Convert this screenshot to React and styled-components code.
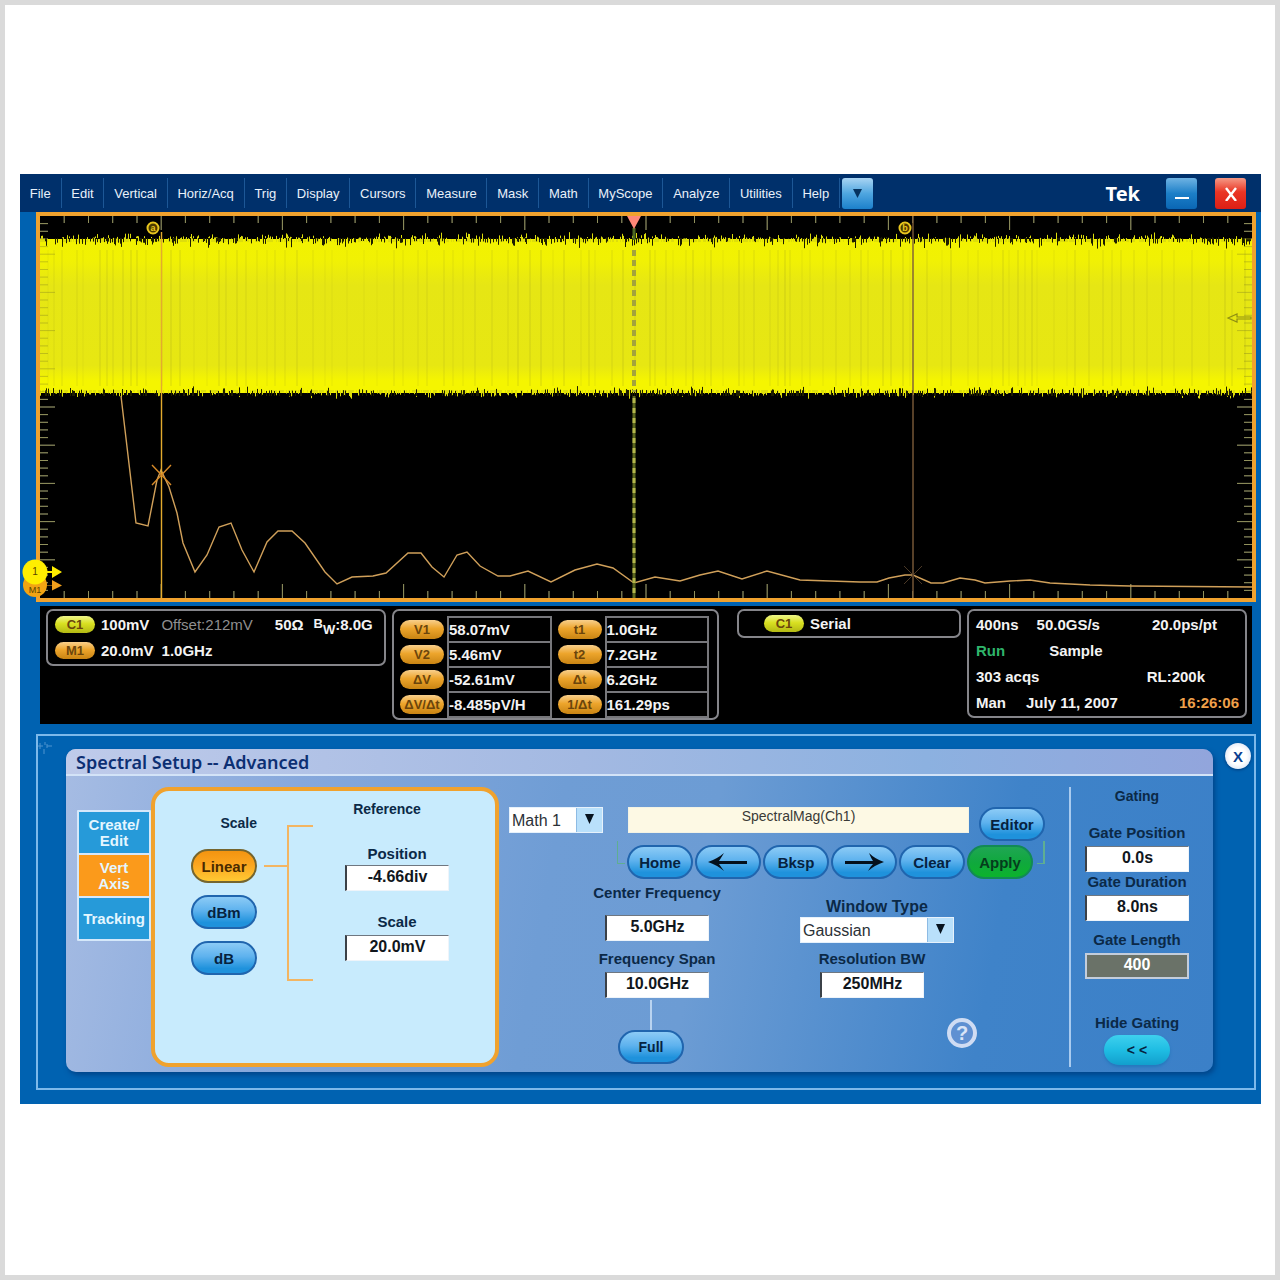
import React from "react";
import styled, { createGlobalStyle, css } from "styled-components";

const menuItems = [
  "File", "Edit", "Vertical", "Horiz/Acq", "Trig", "Display", "Cursors",
  "Measure", "Mask", "Math", "MyScope", "Analyze", "Utilities", "Help",
];

const voltCursors = [
  ["V1", "58.07mV"],
  ["V2", "5.46mV"],
  ["ΔV", "-52.61mV"],
  ["ΔV/Δt", "-8.485pV/H"],
];

const timeCursors = [
  ["t1", "1.0GHz"],
  ["t2", "7.2GHz"],
  ["Δt", "6.2GHz"],
  ["1/Δt", "161.29ps"],
];

// plot area is 1212 x 382, ten divisions each way
const PLOT_W = 1212;
const PLOT_H = 382;

const spectrum = [
  [81, 180], [96, 307], [108, 310], [117, 264], [121, 254], [129, 271],
  [137, 297], [143, 327], [155, 356], [167, 339], [179, 311], [191, 307],
  [202, 334], [214, 356], [227, 326], [238, 315], [252, 315], [265, 327],
  [285, 356], [297, 368], [312, 361], [333, 360], [346, 357], [368, 337],
  [381, 337], [392, 351], [404, 361], [417, 339], [427, 336], [440, 350],
  [458, 360], [470, 360], [488, 355], [511, 366], [535, 354], [557, 348],
  [573, 352], [594, 367], [615, 361], [640, 365], [660, 359], [678, 355],
  [702, 363], [727, 355], [760, 364], [820, 366], [837, 366], [849, 362],
  [865, 359], [873, 359], [891, 367], [903, 367], [920, 362], [935, 364],
  [945, 367], [970, 365], [990, 364], [1010, 367], [1050, 369], [1090, 370],
  [1212, 371],
];

function makeRandom(seed) {
  let s = seed;
  return () => {
    s = (s * 16807) % 2147483647;
    return s / 2147483647;
  };
}

// one column per pixel, with thin spikes out of the band and gaps into it
function noiseBand() {
  const rnd = makeRandom(77);
  let spikes = "";
  let gaps = "";
  for (let x = 0; x < PLOT_W; x++) {
    if (rnd() < 0.62) spikes += `M${x}.5 26V${(24 - rnd() * rnd() * 8).toFixed(1)}`;
    if (rnd() < 0.3) gaps += `M${x}.5 22V${(25 + rnd() * rnd() * 8).toFixed(1)}`;
    if (rnd() < 0.6) spikes += `M${x}.5 174V${(176 + rnd() * rnd() * 7).toFixed(1)}`;
    if (rnd() < 0.22) gaps += `M${x}.5 180V${(175 - rnd() * rnd() * 5).toFixed(1)}`;
  }
  return { spikes, gaps };
}

function streaks() {
  const rnd = makeRandom(31);
  const lines = [];
  let x = 8;
  while (x < PLOT_W) {
    lines.push({ x: Math.round(x), o: 0.12 + rnd() * 0.3 });
    x += 5 + rnd() * 13;
  }
  return lines;
}

function ticks() {
  let d = "";
  for (let i = 1; i < 50; i++) {
    const x = ((PLOT_W / 50) * i).toFixed(1);
    const y = ((PLOT_H / 50) * i).toFixed(1);
    const lx = i % 5 === 0 ? 14 : 7;
    const ly = i % 5 === 0 ? 15 : 8;
    d += `M${x} 0v${lx}M${x} ${PLOT_H}v-${lx}`;
    d += `M0 ${y}h${ly}M${PLOT_W} ${y}h-${ly}`;
  }
  return d;
}

const noise = noiseBand();
const bandStreaks = streaks();
const tickPath = ticks();

function Plot() {
  return (
    <PlotSvg viewBox="0 0 1212 382" preserveAspectRatio="none">
      <defs>
        <linearGradient id="band" x1="0" y1="0" x2="0" y2="1">
          <stop offset="0" stopColor="#f2f200" />
          <stop offset="0.14" stopColor="#f1f104" />
          <stop offset="0.3" stopColor="#e6e614" />
          <stop offset="0.82" stopColor="#e7e712" />
          <stop offset="0.92" stopColor="#f5f500" />
          <stop offset="1" stopColor="#f5f500" />
        </linearGradient>
      </defs>
      <path d={tickPath} stroke="#96968e" strokeWidth="1" fill="none" />
      <rect y="23" width="1212" height="154" fill="url(#band)" />
      <path d={noise.spikes} stroke="#dede0c" fill="none" />
      <path d={noise.gaps} stroke="#1d1d00" fill="none" />
      {bandStreaks.map((s) => (
        <line key={s.x} x1={s.x} x2={s.x} y1="34" y2="170" stroke="#a9a91c" strokeOpacity={s.o} />
      ))}
      <path d={tickPath} stroke="#8c8c20" strokeOpacity="0.45" fill="none" />
      <polyline
        points={spectrum.map((p) => p.join(",")).join(" ")}
        fill="none"
        stroke="#d0a05a"
        strokeWidth="1.4"
      />
      <line x1="121.5" x2="121.5" y1="16" y2="382" stroke="#e3ab2e" strokeWidth="1.4" />
      <path d="M112 249l19 20M131 249l-19 20" stroke="#d78a28" strokeWidth="1.4" />
      <line x1="873" x2="873" y1="0" y2="382" stroke="#7d5c3a" strokeWidth="1.4" />
      <path d="M864 350l18 18M882 350l-18 18" stroke="#5d4630" strokeWidth="0.8" />
      <line x1="594" x2="594" y1="12" y2="24" stroke="#4d6a22" strokeWidth="3" />
      <line x1="594" x2="594" y1="34" y2="176" stroke="#a3a33c" strokeWidth="4" strokeDasharray="6 4" />
      <line x1="594" x2="594" y1="180" y2="382" stroke="#5b661e" strokeWidth="3" />
      <line x1="594" x2="594" y1="182" y2="382" stroke="#b3b54c" strokeWidth="3" strokeDasharray="5 5" />
      <path d="M587 0h14l-7 13z" fill="#ff8878" />
      <path d="M1188 102l9-4v3h14v2h-14v3z" fill="none" stroke="#8f8f12" strokeWidth="1.2" />
      <CursorFlag x={113} label="a" />
      <CursorFlag x={865} label="b" />
    </PlotSvg>
  );
}

function CursorFlag({ x, label }) {
  return (
    <g>
      <circle cx={x} cy="12" r="5.5" fill="#4d3a00" stroke="#e8c61e" strokeWidth="2" />
      <FlagText x={x} y="15" textAnchor="middle">{label}</FlagText>
    </g>
  );
}

function ChannelMarks() {
  return (
    <MarksSvg viewBox="0 0 44 40">
      <circle cx="14" cy="27" r="12" fill="#f2a413" />
      <path d="M25 27h6v-5l10 5.500l-10 5v-5h-6z" fill="#f2a01c" />
      <MarkText x="14" y="35" textAnchor="middle" $small>M1</MarkText>
      <circle cx="14" cy="14" r="12.500" fill="#ffee00" />
      <path d="M26 13h5v-5l10 6l-10 6v-5h-5z" fill="#ffee00" />
      <MarkText x="14" y="17" textAnchor="middle">1</MarkText>
    </MarksSvg>
  );
}

function CursorTable({ rows }) {
  return (
    <Readings>
      <tbody>
        {rows.map(([name, value]) => (
          <tr key={name}>
            <ReadingName scope="row"><Pill $wide>{name}</Pill></ReadingName>
            <ReadingValue>{value}</ReadingValue>
          </tr>
        ))}
      </tbody>
    </Readings>
  );
}

function Field({ id, label, value, gap, before }) {
  return (
    <FieldBox $gap={gap} $before={before}>
      <Label htmlFor={id}>{label}</Label>
      <ValueInput id={id} defaultValue={value} />
    </FieldBox>
  );
}

function DropDown({ id, label, options, width }) {
  return (
    <SelectBox $width={width}>
      <Select id={id} aria-label={label}>
        {options.map((o) => <option key={o}>{o}</option>)}
      </Select>
      <SelectArrow>
        <svg width="9" height="11" viewBox="0 0 9 11"><path d="M0 1h9l-4.500 10z" fill="#07131f" /></svg>
      </SelectArrow>
    </SelectBox>
  );
}

function ArrowIcon({ flip }) {
  return (
    <svg width="40" height="18" viewBox="0 0 40 18">
      <path
        d={flip
          ? "M40 9q-9-3-15-9q2 5 4 8h-28v3h28q-3 3-5 7q7-6 16-9z"
          : "M0 9q9-3 16-9q-3 5-5 8h28v3h-28q2 3 5 7q-7-6-16-9z"}
        fill="#04101c"
      />
    </svg>
  );
}

export default function App() {
  return (
    <Page>
      <GlobalStyle />
      <Window>
        <MenuBar>
          <Menus>
            {menuItems.map((m) => <MenuButton key={m}>{m}</MenuButton>)}
          </Menus>
          <BarButton aria-label="More menus" $first>
            <svg width="9" height="9" viewBox="0 0 9 9"><path d="M0 0h9l-4.500 9z" fill="#06335f" /></svg>
          </BarButton>
          <Brand>Tek</Brand>
          <BarButton aria-label="Minimize" $deep>
            <svg width="16" height="16" viewBox="0 0 16 16"><path d="M1 12h14v2h-14z" fill="#fff" /></svg>
          </BarButton>
          <BarButton aria-label="Close" $red>
            <svg width="14" height="16" viewBox="0 0 14 16"><path d="M2 3l10 13M12 3l-10 13" stroke="#fff" strokeWidth="2.400" /></svg>
          </BarButton>
        </MenuBar>

        <Body>
          <Scope>
            <Plot />
            <ChannelMarks />
          </Scope>

          <Readout>
            <ReadoutBox>
              <Line>
                <Pill $lime>C1</Pill>
                <Value $before={6}>100mV</Value>
                <Value $before={12} $dim>Offset:212mV</Value>
                <Value $before={22}>50Ω</Value>
                <Value $before={10}><Sup>B</Sup><Sub>W</Sub>:8.0G</Value>
              </Line>
              <Line>
                <Pill>M1</Pill>
                <Value $before={6}>20.0mV</Value>
                <Value $before={8}>1.0GHz</Value>
              </Line>
            </ReadoutBox>
            <ReadoutBox $tables>
              <CursorTable rows={voltCursors} />
              <CursorTable rows={timeCursors} />
            </ReadoutBox>
            <ReadoutBox $apart>
              <Line>
                <Pill $lime>C1</Pill>
                <Value $before={6}>Serial</Value>
              </Line>
            </ReadoutBox>
            <ReadoutBox>
              <Line>
                <Value>400ns</Value>
                <Value $before={18}>50.0GS/s</Value>
                <Value $push $after={22}>20.0ps/pt</Value>
              </Line>
              <Line>
                <Value $green>Run</Value>
                <Value $before={44}>Sample</Value>
              </Line>
              <Line>
                <Value>303 acqs</Value>
                <Value $push $after={34}>RL:200k</Value>
              </Line>
              <Line>
                <Value>Man</Value>
                <Value $before={20}>July 11, 2007</Value>
                <Value $push $amber>16:26:06</Value>
              </Line>
            </ReadoutBox>
          </Readout>

          <Dock>
            <svg width="14" height="12" viewBox="0 0 14 12">
              <path d="M0 4h5M9 4h5M7 0v3M2 1v6M6 7v5M9 2v4" stroke="#4f94cf" />
            </svg>
            <Card>
              <CardTitle>Spectral Setup -- Advanced</CardTitle>
              <CardBody>
                <Tabs>
                  <Tab>Create/<br />Edit</Tab>
                  <Tab $active>Vert<br />Axis</Tab>
                  <Tab>Tracking</Tab>
                </Tabs>

                <AxisPanel>
                  <ScaleColumn>
                    <SmallLabel>Scale</SmallLabel>
                    <ScaleButtons>
                      <PillButton $orange>Linear</PillButton>
                      <PillButton>dBm</PillButton>
                      <PillButton>dB</PillButton>
                    </ScaleButtons>
                  </ScaleColumn>
                  <Bracket width="50" height="157" viewBox="0 0 50 157">
                    <path d="M49 1H24V155H49M0 41H24" fill="none" stroke="#f3b562" strokeWidth="2" />
                  </Bracket>
                  <ReferenceColumn>
                    <ReferenceTitle>Reference</ReferenceTitle>
                    <Field id="pos" label="Position" value="-4.66div" gap={3} before={29} />
                    <Field id="scale" label="Scale" value="20.0mV" gap={5} before={23} />
                  </ReferenceColumn>
                </AxisPanel>

                <Main>
                  <TopRow>
                    <DropDown id="math" label="Math channel" options={["Math 1", "Math 2"]} width={94} />
                    <Editing>
                      <ExpressionRow>
                        <Expression aria-label="Expression" defaultValue="SpectralMag(Ch1)" />
                        <PillButton>Editor</PillButton>
                      </ExpressionRow>
                      <KeyRow>
                        <KeyEnd />
                        <PillButton>Home</PillButton>
                        <PillButton aria-label="Left"><ArrowIcon /></PillButton>
                        <PillButton>Bksp</PillButton>
                        <PillButton aria-label="Right"><ArrowIcon flip /></PillButton>
                        <PillButton>Clear</PillButton>
                        <PillButton $green>Apply</PillButton>
                        <KeyEnd $right />
                      </KeyRow>
                    </Editing>
                  </TopRow>
                  <LowerRow>
                    <FrequencyColumn>
                      <Field id="center" label="Center Frequency" value="5.0GHz" gap={14} />
                      <Field id="span" label="Frequency Span" value="10.0GHz" gap={5} before={10} />
                      <FullGroup>
                        <Stem />
                        <PillButton $small>Full</PillButton>
                      </FullGroup>
                    </FrequencyColumn>
                    <WindowColumn>
                      <WindowGroup>
                        <Label htmlFor="wtype" $large>Window Type</Label>
                        <DropDown id="wtype" label="Window Type" options={["Gaussian", "Hanning"]} width={154} />
                      </WindowGroup>
                      <ResolutionGroup>
                        <Field id="rbw" label="Resolution BW" value="250MHz" gap={5} before={8} />
                      </ResolutionGroup>
                      <HelpButton aria-label="Help">?</HelpButton>
                    </WindowColumn>
                  </LowerRow>
                </Main>

                <Gating>
                  <SmallLabel>Gating</SmallLabel>
                  <Field id="gpos" label="Gate Position" value="0.0s" gap={5} before={21} />
                  <Field id="gdur" label="Gate Duration" value="8.0ns" gap={5} before={2} />
                  <FieldBox $gap={5} $before={11}>
                    <Label as="span">Gate Length</Label>
                    <LengthOutput>400</LengthOutput>
                  </FieldBox>
                  <FieldBox $gap={4} $before={36}>
                    <Label as="span">Hide Gating</Label>
                    <PillButton $cyan $small aria-label="Hide Gating">&lt; &lt;</PillButton>
                  </FieldBox>
                </Gating>
              </CardBody>
            </Card>
            <CloseButton aria-label="Close setup">X</CloseButton>
          </Dock>
        </Body>
      </Window>
    </Page>
  );
}

const GlobalStyle = createGlobalStyle`
  * { box-sizing: border-box; }
  body { margin: 0; background: #fff; }
  body, button, input, select { font-family: "Liberation Sans", Arial, sans-serif; }
  button { border: 0; margin: 0; padding: 0; cursor: pointer; }
  svg { display: block; flex: none; }
`;

const Page = styled.div`
  min-height: 100vh;
  border: 5px solid #dadada;
  padding: 169px 14px 0 15px;
`;

const Window = styled.div`
  background: #0062b1;
  padding-bottom: 14px;
`;

const MenuBar = styled.nav`
  display: flex;
  align-items: center;
  height: 38px;
  padding-right: 15px;
  background: #00306b;
`;

const Menus = styled.div`
  display: flex;
  flex: 0 1 820px;
`;

const MenuButton = styled.button`
  flex: 1 1 auto;
  height: 30px;
  padding: 0 4px;
  border-right: 1px solid #1d5796;
  background: none;
  color: #e9f1fa;
  font-size: 13px;
`;

const BarButton = styled.button`
  display: flex;
  align-items: center;
  justify-content: center;
  width: 31px;
  height: 31px;
  border-radius: 3px;
  background: linear-gradient(#a9d4f3, #4fa6e0 50%, #1c80cb);
  margin-left: ${(p) => (p.$first ? 2 : 18)}px;
  ${(p) => p.$deep && css`background: linear-gradient(#6fb3e3, #1c7fc8 50%, #0a66b4);`}
  ${(p) => p.$red && css`background: linear-gradient(#f59a86, #ea3524 45%, #dc1f16);`}
`;

const Brand = styled.span`
  margin-left: auto;
  padding: 0 8px;
  color: #fff;
  font-family: "Noto Sans", sans-serif;
  font-size: 20px;
  font-weight: 700;
`;

const Body = styled.div`
  padding: 0 5px 0 16px;
`;

const Scope = styled.section`
  position: relative;
  border: 4px solid #f0a22e;
  background: #000;
`;

const PlotSvg = styled.svg`
  width: 100%;
  height: 382px;
`;

const FlagText = styled.text`
  font-size: 9px;
  font-weight: 700;
  fill: #e8c61e;
`;

const MarksSvg = styled.svg`
  position: absolute;
  left: -19px;
  bottom: 0;
  width: 44px;
  height: 40px;
`;

const MarkText = styled.text`
  font-size: ${(p) => (p.$small ? 9 : 10)}px;
  fill: #5a4300;
`;

const Readout = styled.section`
  display: grid;
  grid-template-columns: 340fr 327fr 236fr 280fr;
  align-items: start;
  gap: 6px;
  min-height: 118px;
  margin: 4px 4px 10px;
  padding: 3px 5px 3px 6px;
  background: #000;
`;

const ReadoutBox = styled.div`
  border: 2px solid #85858a;
  border-radius: 7px;
  padding: 1px 6px 1px 7px;
  ${(p) => p.$tables && css`
    display: flex;
    gap: 6px;
    padding: 5px 8px 0 6px;
  `}
  ${(p) => p.$apart && css`
    margin-left: 12px;
    padding: 0 0 0 25px;
  `}
`;

const Line = styled.div`
  display: flex;
  align-items: center;
  height: 25px;
  & + & {
    margin-top: 1px;
  }
`;

const Pill = styled.span`
  display: flex;
  align-items: center;
  justify-content: center;
  width: ${(p) => (p.$wide ? 44 : 40)}px;
  height: ${(p) => (p.$wide ? 19 : 17)}px;
  border-radius: 10px;
  background: ${(p) => (p.$lime
    ? "linear-gradient(#eef58a, #d9e021 45%, #b3b914)"
    : "linear-gradient(#f8cf8c, #eda52c 45%, #c98413)")};
  color: #6b450c;
  font-size: 13px;
  font-weight: 700;
`;

const Value = styled.span`
  margin-left: ${(p) => (p.$push ? "auto" : `${p.$before || 0}px`)};
  margin-right: ${(p) => p.$after || 0}px;
  color: ${(p) => (p.$dim ? "#8f8f8f" : p.$green ? "#2fb56b" : p.$amber ? "#f0a04a" : "#f3f3f3")};
  font-size: 15px;
  font-weight: ${(p) => (p.$dim ? 400 : 700)};
  white-space: nowrap;
`;

const Sup = styled.sup`
  font-size: 13px;
  line-height: 0;
  vertical-align: 2px;
`;

const Sub = styled.sub`
  font-size: 13px;
  line-height: 0;
`;

const Readings = styled.table`
  flex: 1;
  border-collapse: collapse;
`;

const ReadingName = styled.th`
  width: 47px;
  padding: 0 3px 0 0;
`;

const ReadingValue = styled.td`
  height: 25px;
  padding: 0;
  border: 2px solid #77777b;
  color: #f3f3f3;
  font-size: 15px;
  font-weight: 700;
  line-height: 17px;
`;

const Dock = styled.section`
  display: flex;
  align-items: flex-start;
  border: 2px solid #7db9ea;
  padding: 6px 3px 16px 0;
`;

const Card = styled.div`
  flex: 1;
  margin: 7px 12px 0 14px;
  border-radius: 10px;
  overflow: hidden;
  background: linear-gradient(100deg, #a6bce3 0%, #86a8dc 20%, #6f9dd5 42%, #6c9cd4 55%, #3f83c9 80%, #3b80c8 100%);
  box-shadow: 2px 3px 5px rgba(0, 40, 100, 0.5);
`;

const CardTitle = styled.h1`
  margin: 0;
  padding-left: 10px;
  height: 27px;
  border-bottom: 2px solid #d3e3f7;
  background: linear-gradient(90deg, #bfcbea, #a3b9e2 45%, #8cb1e0 75%, #92a5dc);
  color: #0c2f73;
  font-family: "Noto Sans", sans-serif;
  font-size: 18px;
  font-weight: 600;
  line-height: 26px;
`;

const CardBody = styled.div`
  display: flex;
  align-items: flex-start;
  padding: 11px 10px 5px 11px;
`;

const Tabs = styled.div`
  display: flex;
  flex-direction: column;
  gap: 2px;
  width: 74px;
  margin-top: 23px;
  padding: 2px;
  border-radius: 1px;
  background: #d5e8fa;
`;

const Tab = styled.button`
  height: 41px;
  background: ${(p) => (p.$active ? "#fb9a1b" : "#269ad9")};
  color: #e4f6ff;
  font-size: 15px;
  font-weight: 700;
  line-height: 16px;
`;

const AxisPanel = styled.div`
  display: flex;
  align-items: flex-start;
  width: 348px;
  min-height: 280px;
  border: 4px solid #f0a22e;
  border-radius: 18px;
  background: #c8ebfd;
  padding-left: 36px;
`;

const ScaleColumn = styled.div`
  width: 66px;
  padding-top: 24px;
  text-align: right;
`;

const ScaleButtons = styled.div`
  display: flex;
  flex-direction: column;
  gap: 12px;
  margin-top: 18px;
`;

const Bracket = styled.svg`
  margin: 34px 31px 0 7px;
`;

const ReferenceColumn = styled.div`
  padding-top: 10px;
`;

const labelText = css`
  display: block;
  color: #0b2947;
  font-weight: 700;
  line-height: 16px;
  white-space: nowrap;
`;

const SmallLabel = styled.span`
  ${labelText}
  font-size: 14px;
`;

const ReferenceTitle = styled(SmallLabel)`
  padding-right: 20px;
  text-align: center;
`;

const Label = styled.label`
  ${labelText}
  font-size: ${(p) => (p.$large ? 16 : 15)}px;
`;

const FieldBox = styled.div`
  display: flex;
  flex-direction: column;
  align-items: center;
  gap: ${(p) => p.$gap}px;
  margin-top: ${(p) => p.$before || 0}px;
`;

const ValueInput = styled.input`
  width: 104px;
  height: 26px;
  padding: 0 0 3px;
  border: 1px solid #eef4fa;
  border-left: 2px solid #3b4148;
  border-top-color: #6f7780;
  background: #fff;
  color: #10161c;
  font-size: 16px;
  font-weight: 700;
  text-align: center;
`;

const LengthOutput = styled.output`
  width: 104px;
  height: 26px;
  border: 2px solid #c3cddb;
  background: #6a7268;
  color: #fff;
  font-size: 16px;
  font-weight: 700;
  line-height: 20px;
  text-align: center;
`;

const PillButton = styled.button`
  display: flex;
  align-items: center;
  justify-content: center;
  width: 66px;
  height: 34px;
  flex: none;
  border: 2px solid #2065ae;
  border-radius: 17px;
  background: linear-gradient(#8ccbf6, #5eb2ee 45%, #1f92dc 85%);
  color: #06223f;
  font-size: ${(p) => (p.$small ? 14 : 15)}px;
  font-weight: 700;
  ${(p) => p.$orange && css`
    border-color: #75652e;
    background: linear-gradient(#f39410, #fba51f 45%, #ffc933);
    color: #4a2a00;
  `}
  ${(p) => p.$green && css`
    border-color: #128a55;
    background: linear-gradient(#1fa653, #10a83e 50%, #0cb32c);
    color: #053d1c;
  `}
  ${(p) => p.$cyan && css`
    height: 30px;
    border: 0;
    background: linear-gradient(#3ed0ee, #1fbde3 50%, #129fcd);
    box-shadow: 0 2px 3px #2478bd;
  `}
`;

const SelectBox = styled.div`
  display: flex;
  width: ${(p) => p.$width}px;
  height: 26px;
  border: 1px solid #e6f1fb;
  background: #fff;
`;

const Select = styled.select`
  flex: 1;
  min-width: 0;
  padding: 0 0 0 2px;
  border: 0;
  appearance: none;
  background: #fff;
  color: #2b3137;
  font-size: 16px;
`;

const SelectArrow = styled.span`
  display: flex;
  justify-content: center;
  width: 26px;
  padding-top: 5px;
  border-left: 1px solid #8dbbe4;
  background: #b9e0fb;
`;

const Main = styled.div`
  flex: 1;
  padding: 20px 0 0 10px;
`;

const TopRow = styled.div`
  display: flex;
  align-items: flex-start;
  gap: 14px;
`;

const Editing = styled.div`
  display: flex;
  flex-direction: column;
  gap: 4px;
`;

const ExpressionRow = styled.div`
  display: flex;
  align-items: flex-start;
  gap: 10px;
  padding-left: 11px;
`;

const Expression = styled.input`
  width: 341px;
  height: 26px;
  padding: 0 0 8px;
  border: 1px solid #f3f3e4;
  background: #fdf9e4;
  color: #3a3a36;
  font-size: 14px;
  text-align: center;
`;

const KeyRow = styled.div`
  display: flex;
  gap: 2px;
`;

const KeyEnd = styled.span`
  width: 8px;
  height: 23px;
  margin-top: -4px;
  border: 0 solid #5fae92;
  border-bottom-width: 1px;
  ${(p) => (p.$right ? css`border-right-width: 2px; margin-left: 2px;` : css`border-left-width: 1px;`)}
`;

const LowerRow = styled.div`
  display: flex;
  gap: 80px;
  padding: 6px 0 0 85px;
`;

const FrequencyColumn = styled.div`
  width: 126px;
`;

const FullGroup = styled.div`
  display: flex;
  flex-direction: column;
  align-items: center;
  padding-right: 12px;
`;

const Stem = styled.span`
  width: 2px;
  height: 30px;
  margin-top: 2px;
  background: #b9d3f0;
`;

const WindowColumn = styled.div`
  display: flex;
  flex-direction: column;
  width: 177px;
  padding-top: 14px;
`;

const WindowGroup = styled.div`
  display: flex;
  flex-direction: column;
  align-items: center;
  gap: 2px;
  width: 154px;
`;

const ResolutionGroup = styled.div`
  width: 144px;
`;

const HelpButton = styled.button`
  align-self: flex-end;
  width: 30px;
  height: 30px;
  margin-top: 20px;
  border: 4px solid #cfdcf3;
  border-radius: 50%;
  background: #5f90d2;
  color: #d9e4f7;
  font-size: 20px;
  font-weight: 700;
  line-height: 22px;
`;

const Gating = styled.div`
  display: flex;
  flex-direction: column;
  align-items: center;
  align-self: stretch;
  width: 134px;
  padding-top: 1px;
  border-left: 2px solid #a9cbef;
`;

const CloseButton = styled.button`
  width: 26px;
  height: 26px;
  margin-top: 1px;
  border-radius: 50%;
  background: radial-gradient(#ffffff 45%, #c8d6ee);
  box-shadow: 0 1px 3px #003a7a;
  color: #0c3f8f;
  font-size: 15px;
  font-weight: 700;
`;
